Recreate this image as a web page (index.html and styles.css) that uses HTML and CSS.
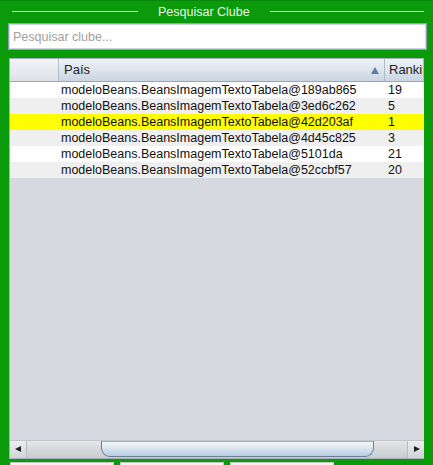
FILE: index.html
```html
<!DOCTYPE html>
<html lang="pt">
<head>
    <meta charset="UTF-8">
    <title>Pesquisar Clube</title>
    <link rel="stylesheet" href="styles.css">
</head>
<body>

    <div class="frame">
        <div class="title-row">
            <span class="line short"></span>
            <span class="title">Pesquisar Clube</span>
            <span class="line"></span>
        </div>

        <div class="search">
            <input type="text" placeholder="Pesquisar clube...">
        </div>

        <div class="table">
            <div class="head">
                <div class="cell c1"></div>
                <div class="cell c2">País <span class="sort"></span></div>
                <div class="cell c3">Rankin</div>
            </div>
            <div class="body">
                <div class="row">
                    <div class="cell c1"></div>
                    <div class="cell c2">modeloBeans.BeansImagemTextoTabela@189ab865</div>
                    <div class="cell c3">19</div>
                </div>
                <div class="row alt">
                    <div class="cell c1"></div>
                    <div class="cell c2">modeloBeans.BeansImagemTextoTabela@3ed6c262</div>
                    <div class="cell c3">5</div>
                </div>
                <div class="row selected">
                    <div class="cell c1"></div>
                    <div class="cell c2">modeloBeans.BeansImagemTextoTabela@42d203af</div>
                    <div class="cell c3">1</div>
                </div>
                <div class="row alt">
                    <div class="cell c1"></div>
                    <div class="cell c2">modeloBeans.BeansImagemTextoTabela@4d45c825</div>
                    <div class="cell c3">3</div>
                </div>
                <div class="row">
                    <div class="cell c1"></div>
                    <div class="cell c2">modeloBeans.BeansImagemTextoTabela@5101da</div>
                    <div class="cell c3">21</div>
                </div>
                <div class="row alt">
                    <div class="cell c1"></div>
                    <div class="cell c2">modeloBeans.BeansImagemTextoTabela@52ccbf57</div>
                    <div class="cell c3">20</div>
                </div>
            </div>
            <div class="hscroll">
                <div class="arrow left"></div>
                <div class="track">
                    <div class="thumb"></div>
                </div>
                <div class="arrow right"></div>
            </div>
        </div>

        <div class="footer">
            <div class="tab"></div>
            <div class="tab"></div>
            <div class="tab"></div>
        </div>
    </div>

</body>
</html>
```

FILE: styles.css
```css
body {
    margin: 0;
    background-color: #0a9a0a;
    font-family: "Liberation Sans", Arial, sans-serif;
    overflow: hidden;
}
.frame {
    width: 433px;
    height: 465px;
    border-top: 1px solid #08880a;
    box-sizing: border-box;
}
.title-row {
    display: flex;
    align-items: center;
    gap: 20px;
    height: 21px;
    padding: 0 9px 0 12px;
}
.line {
    flex: 1;
    height: 1px;
    background-color: #d8f0d8;
}
.line.short {
    flex: none;
    width: 126px;
}
.title {
    color: #e8f8e8;
    font-size: 12.5px;
}
.search {
    margin: 1px 6px 0 8px;
    height: 27px;
    border: 1px solid #8ba3b5;
    box-sizing: border-box;
    background: white;
    box-shadow: inset 0 0 0 1px #c9d6e0;
}
.search input {
    width: 100%;
    height: 100%;
    border: none;
    outline: none;
    background: transparent;
    padding: 0 4px;
    box-sizing: border-box;
    font-family: "Liberation Sans", Arial, sans-serif;
    font-size: 12.5px;
}
.search input::placeholder {
    color: #a0a0a0;
}
.table {
    margin: 8px 9px 0 9px;
    height: 401px;
    background-color: #d6d9df;
    display: flex;
    flex-direction: column;
    border: 1px solid #a8b0b8;
    border-right: none;
    box-sizing: border-box;
    overflow: hidden;
}
.head {
    display: flex;
    height: 22px;
    background: linear-gradient(#eef2f6, #dbe3ec 55%, #c9d5e2);
    border-bottom: 1px solid #9aa8b6;
    font-size: 13px;
    color: #222;
}
.head .cell {
    border-right: 1px solid #b0bcc8;
    line-height: 22px;
    position: relative;
}
.head .c1 {
    background: linear-gradient(#f2f4f6, #dde1e6);
}
.sort {
    position: absolute;
    right: 5px;
    top: 8px;
    width: 0;
    height: 0;
    border-left: 4px solid transparent;
    border-right: 4px solid transparent;
    border-bottom: 7px solid #5a7ea8;
}
.cell {
    box-sizing: border-box;
    white-space: nowrap;
    overflow: hidden;
}
.c1 {
    width: 49px;
}
.c2 {
    width: 326px;
    padding-left: 2px;
}
.c3 {
    flex: 1;
    padding-left: 3px;
}
.head .c2 {
    padding-left: 5px;
}
.head .c3 {
    padding-left: 4px;
}
.body {
    flex: 1;
}
.row {
    display: flex;
    height: 16px;
    line-height: 16px;
    font-size: 12.5px;
    color: #111;
    background: white;
}
.row.alt {
    background-color: #efefef;
}
.row.selected {
    background-color: #ffff00;
}
.hscroll {
    display: flex;
    height: 17px;
    background: linear-gradient(#eceef0, #d0d4d8);
    border-top: 1px solid #c0c6cc;
}
.arrow {
    width: 16px;
    position: relative;
}
.arrow::after {
    content: "";
    position: absolute;
    top: 5px;
    width: 0;
    height: 0;
    border-top: 3px solid transparent;
    border-bottom: 3px solid transparent;
}
.arrow.left::after {
    left: 5px;
    border-right: 6px solid #222;
}
.arrow.right::after {
    left: 6px;
    border-left: 6px solid #222;
}
.track {
    flex: 1;
    position: relative;
    background: linear-gradient(#e4e6e8, #c8ccd0);
    border-left: 1px solid #b8bcc0;
    border-right: 1px solid #b8bcc0;
}
.thumb {
    position: absolute;
    left: 74px;
    right: 33px;
    top: 0;
    bottom: 1px;
    border: 1px solid #6a7f94;
    border-top-color: #9fb3c6;
    border-radius: 0 0 9px 9px;
    background: linear-gradient(#f4f8fb, #d8e5f0 45%, #b8cde0);
}
.footer {
    display: flex;
    gap: 6px;
    padding: 3px 0 0 10px;
}
.tab {
    width: 102px;
    height: 6px;
    background: #f4f4f4;
    border: 1px solid #c4c4c4;
}
```
